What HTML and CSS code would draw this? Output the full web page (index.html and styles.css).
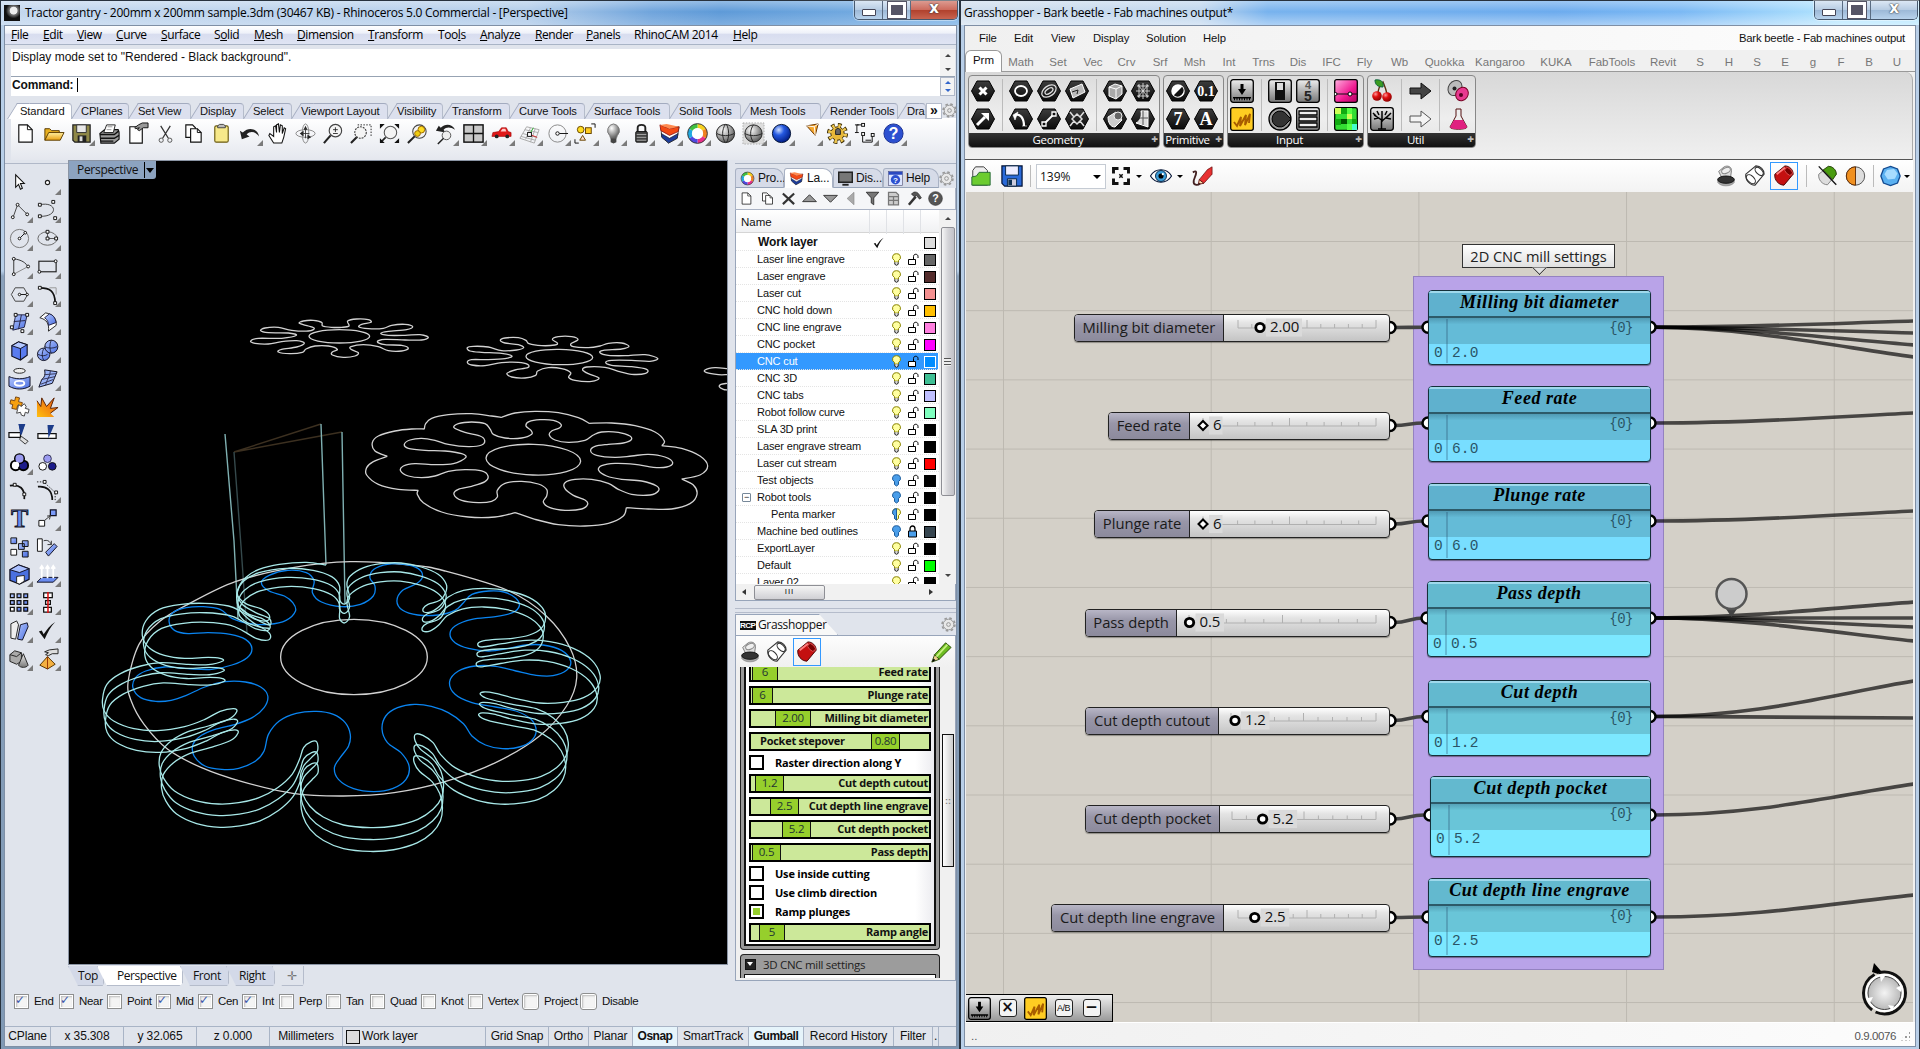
FILE: index.html
```html
<!DOCTYPE html>
<html lang="en">
<head>
<meta charset="utf-8">
<title>Tractor gantry - Rhinoceros / Grasshopper</title>
<link rel="stylesheet" href="styles.css">
</head>
<body>
<svg class="paints" aria-hidden="true">
<defs>
<linearGradient id="gGrey" x1="0" y1="0" x2="0" y2="1"><stop offset="0" stop-color="#eee"/><stop offset="1" stop-color="#777"/></linearGradient>
<linearGradient id="gBlue" x1="0" y1="0" x2="1" y2="1"><stop offset="0" stop-color="#b4c8ff"/><stop offset="1" stop-color="#4a6ee0"/></linearGradient>
<linearGradient id="gHex" x1="0" y1="0" x2="0" y2="1"><stop offset="0" stop-color="#3c3c3c"/><stop offset="1" stop-color="#0a0a0a"/></linearGradient>
<linearGradient id="gGold" x1="0" y1="0" x2="0" y2="1"><stop offset="0" stop-color="#fff0a0"/><stop offset="1" stop-color="#e8a010"/></linearGradient>
<linearGradient id="gFire" x1="0" y1="1" x2="1" y2="0"><stop offset="0" stop-color="#ffc010"/><stop offset="1" stop-color="#e85010"/></linearGradient>
<linearGradient id="gPink" x1="0" y1="0" x2="1" y2="1"><stop offset="0" stop-color="#ffb0e0"/><stop offset=".6" stop-color="#f01890"/><stop offset="1" stop-color="#b00060"/></linearGradient>
<radialGradient id="gSph" cx=".35" cy=".3" r=".75"><stop offset="0" stop-color="#fff"/><stop offset="1" stop-color="#555"/></radialGradient>
<radialGradient id="gSphB" cx=".35" cy=".3" r=".75"><stop offset="0" stop-color="#d0e0ff"/><stop offset=".4" stop-color="#2458e0"/><stop offset="1" stop-color="#001a80"/></radialGradient>
<radialGradient id="gRed" cx=".35" cy=".3" r=".75"><stop offset="0" stop-color="#ff9a9a"/><stop offset=".4" stop-color="#e01010"/><stop offset="1" stop-color="#800"/></radialGradient>
<radialGradient id="gCompass"><stop offset="0" stop-color="#f4f4f4"/><stop offset="1" stop-color="#b4b4b4"/></radialGradient>
</defs>
</svg>
<svg class="sprite" aria-hidden="true">
<symbol id="fly" viewBox="0 0 6 6"><path d="M6 0V6H0z" fill="#7a7a7a"/></symbol>
<symbol id="new" viewBox="0 0 24 24"><path d="M5 3h9l5 5v13H5z" fill="#fff" stroke="#111" stroke-width="1.2"/><path d="M14 3v5h5" fill="none" stroke="#111"/></symbol>
<symbol id="open" viewBox="0 0 24 24"><path d="M3 19V7h5l2 2h8v3" fill="#e8b020" stroke="#5a3c00"/><path d="M3 19l4-8h16l-4 8z" fill="url(#gGold)" stroke="#5a3c00"/></symbol>
<symbol id="save" viewBox="0 0 24 24"><path d="M3 3h18v18H5l-2-2z" fill="#8f8848" stroke="#222" stroke-width="1.3"/><path d="M7 3h10v8H7z" fill="#e8e8e8" stroke="#333"/><path d="M8 14h9v7H8z" fill="#222"/><path d="M10 15h3v5h-3z" fill="#ddd"/></symbol>
<symbol id="print" viewBox="0 0 24 24"><path d="M2 12l5-4h14l1 3v7l-5 4H3z" fill="#999" stroke="#111" stroke-width="1.2"/><path d="M6 11l3-8h9l-2 8z" fill="#fff" stroke="#222"/><path d="M10 5h5M9 8h5" stroke="#999"/><path d="M2 13h15l5-4M3 17h14l5-3M3 20h13" stroke="#111" stroke-width="1.4" fill="none"/></symbol>
<symbol id="props" viewBox="0 0 24 24"><path d="M4 5h13v17H4z" fill="#fff" stroke="#111" stroke-width="1.2"/><path d="M9 6l4-3 4-2h6v5h-5l-4 3-2-1 2-2-4 1z" fill="#999" stroke="#111"/></symbol>
<symbol id="cut" viewBox="0 0 24 24"><path d="M7 4l8 13M17 4L9 17" stroke="#333" stroke-width="1.3"/><circle cx="7.500" cy="19" r="2.200" fill="none" stroke="#555"/><circle cx="16.500" cy="19" r="2.200" fill="none" stroke="#555"/></symbol>
<symbol id="copy" viewBox="0 0 24 24"><path d="M4 3h7l3 3v10H4z" fill="#fff" stroke="#111" stroke-width="1.2"/><path d="M9 7h7l4 4v10H9z" fill="#fff" stroke="#111" stroke-width="1.2"/><path d="M16 7v4h4" fill="none" stroke="#111"/></symbol>
<symbol id="paste" viewBox="0 0 24 24"><rect x="5" y="4" width="14" height="17" rx="1.500" fill="#f7e98a" stroke="#6a5a10" stroke-width="1.2"/><path d="M8 6V4l2-1.500h4L16 4v2z" fill="#bbb" stroke="#444"/></symbol>
<symbol id="undo" viewBox="0 0 24 24"><path d="M2 9l2 9 8-3-3-2c4-4 9-3 13 2-1-7-10-11-17-4z" fill="#222"/></symbol>
<symbol id="pan" viewBox="0 0 24 24"><path d="M8 22l-5-8 1-2 4 3V5l2-1 1 7V3l2-1 1 9 1-8 2 1v8l2-6 1.500 1-2 9-2 6z" fill="#fff" stroke="#111" stroke-width="1.1"/></symbol>
<symbol id="orbit" viewBox="0 0 24 24"><ellipse cx="12" cy="12" rx="10" ry="4" fill="none" stroke="#888"/><ellipse cx="12" cy="12" rx="3.500" ry="10" fill="none" stroke="#888"/><path d="M10 9l-4 3 4 3zM14 13l4 3-4 2zM10 8l2-4 2 4z" fill="#222"/><path d="M12 6v11M9 12h7" stroke="#333" stroke-width=".9"/></symbol>
<symbol id="zoom" viewBox="0 0 24 24"><circle cx="14" cy="9" r="6.500" fill="#f4f4f4" stroke="#444" stroke-width="1.2"/><path d="M9 14l-7 8" stroke="#222" stroke-width="2.200"/><path d="M11.500 8h5M14 5.500v5M11.500 12h5" stroke="#222" stroke-width=".9"/></symbol>
<symbol id="zoomwin" viewBox="0 0 24 24"><path d="M8 3h14v13" stroke="#222" fill="none" stroke-dasharray="1.500 1.500"/><circle cx="11" cy="11" r="6" fill="#f4f4f4" stroke="#444" stroke-width="1.200" stroke-dasharray="2 1"/><path d="M7 16l-6 6" stroke="#222" stroke-width="2.200"/></symbol>
<symbol id="zoomext" viewBox="0 0 24 24"><circle cx="13" cy="11" r="6.500" fill="#f4f4f4" stroke="#555" stroke-width="1.100"/><path d="M8 16l-5 5" stroke="#222" stroke-width="1.800"/><path d="M2 2h5l-5 5zM22 2v5l-5-5zM22 22h-5l5-5zM2 22v-5l5 5z" fill="#111"/></symbol>
<symbol id="zoomsel" viewBox="0 0 24 24"><circle cx="14" cy="10" r="7" fill="#f4f4f4" stroke="#444" stroke-width="1.100"/><circle cx="16" cy="8" r="3.500" fill="#fd2" stroke="#960"/><circle cx="12" cy="12" r="3" fill="#ec1" stroke="#960"/><path d="M9 15l-7 7" stroke="#222" stroke-width="2.200"/></symbol>
<symbol id="undoview" viewBox="0 0 24 24"><path d="M2 9l3-5 2 2c5-5 12-4 15 2-5-3-9-3-12 0l2 3z" fill="#222"/><circle cx="13" cy="14" r="4.500" fill="#eee" stroke="#555"/><path d="M10 17l-6 6" stroke="#222" stroke-width="1.600"/></symbol>
<symbol id="views" viewBox="0 0 24 24"><rect x="2" y="3" width="20" height="18" fill="#c9c9c9" stroke="#111" stroke-width="1.500"/><path d="M12 3v18M2 12h20" stroke="#111" stroke-width="1.400"/></symbol>
<symbol id="car" viewBox="0 0 24 24"><path d="M2 15l1-4 6-1 3-4h5l2 4 3 1v4z" fill="#e01818" stroke="#900" stroke-width=".6"/><path d="M11 10l2-3h3l1 3z" fill="#fcc"/><circle cx="7" cy="15" r="2" fill="#222"/><circle cx="18" cy="15" r="2" fill="#222"/></symbol>
<symbol id="cplane" viewBox="0 0 24 24"><path d="M2 17L9 5l13 3-5 14zM5 12l14 4M7 8l14 3M3 15l15 4M13 6l-5 12M18 7l-5 14" stroke="#aaa" fill="none"/><path d="M12 13l4-7" stroke="#2a2"/><path d="M12 13l8 3" stroke="#c22"/><rect x="10" y="11" width="4" height="4" fill="#fff" stroke="#111"/></symbol>
<symbol id="circdot" viewBox="0 0 24 24"><circle cx="12" cy="12" r="9" fill="none" stroke="#888"/><circle cx="12" cy="12" r="1.800" fill="#fff" stroke="#111"/><path d="M14 12h9" stroke="#111"/></symbol>
<symbol id="select" viewBox="0 0 24 24"><circle cx="7" cy="8" r="3.500" fill="#fd2" stroke="#640"/><rect x="12" y="6" width="6" height="6" fill="#fc2" stroke="#640"/><path d="M9 14l3 5H6z" fill="#fdc" stroke="#640"/><path d="M18 2h4v4M1 18v4h4" fill="none" stroke="#111"/></symbol>
<symbol id="bulb" viewBox="0 0 24 24"><path d="M12 2a7 7 0 0 0-4 12l1 3h6l1-3A7 7 0 0 0 12 2z" fill="url(#gSph)" stroke="#777"/><path d="M9 17h6v4l-3 1.500L9 21z" fill="#444"/></symbol>
<symbol id="lock" viewBox="0 0 24 24"><path d="M8 11V6c0-4 8-4 8 0v5" fill="none" stroke="#222" stroke-width="2"/><rect x="6" y="10" width="12" height="11" rx="1" fill="#444" stroke="#111"/><path d="M7 13h10M7 16h10M7 19h10" stroke="#aaa"/></symbol>
<symbol id="layer" viewBox="0 0 24 24"><path d="M3 6l1 10 7 6 9-5 2-12z" fill="#fff" stroke="#222" stroke-width=".8"/><path d="M3.500 12l.5 4 7 6 9-5 1-5-9 5z" fill="#1c3c9a" stroke="#111" stroke-width=".6"/><path d="M2 3l10 4 10-2-1 5-9 4-9-5z" fill="#f34a14" stroke="#811" stroke-width=".8"/><path d="M2 3l7-1 13 3-10 2z" fill="#ff8a50"/></symbol>
<symbol id="wheel" viewBox="0 0 24 24"><g fill="none" stroke-width="4.500"><path d="M12 4a8 8 0 0 1 6.900 4" stroke="#f6d020"/><path d="M18.900 8a8 8 0 0 1 0 8" stroke="#f08020"/><path d="M18.900 16a8 8 0 0 1-6.900 4" stroke="#e8308a"/><path d="M12 20a8 8 0 0 1-6.900-4" stroke="#5048e0"/><path d="M5.100 16a8 8 0 0 1 0-8" stroke="#20a8e0"/><path d="M5.100 8A8 8 0 0 1 12 4" stroke="#40c040"/></g><circle cx="12" cy="12" r="10.300" fill="none" stroke="#333"/><circle cx="12" cy="12" r="5.800" fill="#fff"/></symbol>
<symbol id="sph" viewBox="0 0 24 24"><circle cx="12" cy="12" r="9.500" fill="url(#gSph)" stroke="#222"/><path d="M12 2.500c-4 5-4 14 0 19M3 12c5 3 13 3 18 0M13 2.500c3 5 3 14 0 19" stroke="#222" fill="none"/></symbol>
<symbol id="sphd" viewBox="0 0 24 24"><rect x="1" y="1" width="22" height="22" fill="#ddd" stroke="#aaa" stroke-dasharray="1.500 1.500"/><circle cx="12" cy="12" r="9" fill="url(#gSph)" stroke="#222"/><path d="M12 3c-4 5-4 13 0 18M3 12c5 3 13 3 18 0" stroke="#222" fill="none"/></symbol>
<symbol id="sphb" viewBox="0 0 24 24"><circle cx="12" cy="12" r="9.500" fill="url(#gSphB)" stroke="#013"/></symbol>
<symbol id="cone" viewBox="0 0 24 24"><path d="M9 4l12-2-3 12z" fill="#f6a830" stroke="#630"/><path d="M9 4l8 1 4-3M17 5l1 9" fill="none" stroke="#fff"/></symbol>
<symbol id="gear" viewBox="0 0 24 24"><circle cx="12" cy="12" r="8" fill="none" stroke="#3a2a00" stroke-width="6" stroke-dasharray="3.400 2.900"/><circle cx="12" cy="12" r="7" fill="#e8b838" stroke="#3a2a00"/><circle cx="12" cy="12" r="8" fill="none" stroke="#f0c850" stroke-width="4" stroke-dasharray="2.400 3.900" stroke-dashoffset="-.5"/><path d="M10 9c0-3 5-3 5 0v4h-5z" fill="#666" stroke="#222"/></symbol>
<symbol id="dims" viewBox="0 0 24 24"><path d="M3 3v8M1 3h4M1 11h4M3 3h6M9 12v9h10v-9M12 19h6" stroke="#111" fill="none"/><rect x="8" y="1.500" width="3" height="3" fill="#fff" stroke="#111"/><rect x="8" y="11" width="3" height="3" fill="#fff" stroke="#111"/><rect x="18" y="12" width="3" height="3" fill="#fff" stroke="#111"/></symbol>
<symbol id="help" viewBox="0 0 24 24"><circle cx="12" cy="12" r="10" fill="#2c50d0" stroke="#1a3090"/><text x="12" y="18" text-anchor="middle" font-family="Liberation Sans" font-size="17" font-weight="700" fill="#fff">?</text></symbol>
<symbol id="arrow" viewBox="0 0 24 24"><path d="M8 4v13l3-3 2 5 2-1-2-5h4z" fill="#fff" stroke="#111" stroke-width="1.100"/></symbol>
<symbol id="point" viewBox="0 0 24 24"><circle cx="12" cy="12" r="2.200" fill="#fff" stroke="#222" stroke-width="1.200"/></symbol>
<symbol id="poly" viewBox="0 0 24 24"><path d="M5 20L10 6l10 10" fill="none" stroke="#444"/><g fill="#fff" stroke="#111"><circle cx="5" cy="19" r="1.500"/><circle cx="10" cy="6" r="1.500"/><circle cx="20" cy="16" r="1.500"/></g></symbol>
<symbol id="curve" viewBox="0 0 24 24"><path d="M4 6c18-4 20 13 0 12" fill="none" stroke="#444"/><g fill="#fff" stroke="#111"><path d="M2.500 4.500h3v3h-3zM16.500 1.500h3v3h-3zM2.500 16.500h3v3h-3zM18.500 18.500h3v3h-3z"/></g></symbol>
<symbol id="circle" viewBox="0 0 24 24"><circle cx="12" cy="12" r="9.500" fill="none" stroke="#777"/><path d="M12 12l6-6" stroke="#111"/><circle cx="12" cy="12" r="1.400" fill="#fff" stroke="#111"/><circle cx="18" cy="6" r="1.400" fill="#fff" stroke="#111"/></symbol>
<symbol id="ellipse" viewBox="0 0 24 24"><ellipse cx="12" cy="12" rx="10" ry="7" fill="none" stroke="#666"/><path d="M12 5v7h9" stroke="#555" fill="none"/><path d="M10.500 3.500h3v3h-3zM10.500 10.500h3v3h-3zM19.500 10.500h3v3h-3z" fill="#fff" stroke="#111"/></symbol>
<symbol id="arc" viewBox="0 0 24 24"><path d="M6 20V4c8 1 13 4 15 9" fill="none" stroke="#333"/><path d="M6 20l15-8" stroke="#888"/><g fill="#fff" stroke="#111"><circle cx="6" cy="4" r="1.500"/><circle cx="6" cy="20" r="1.500"/><circle cx="21" cy="12" r="1.500"/></g></symbol>
<symbol id="rect" viewBox="0 0 24 24"><rect x="3" y="6.500" width="18" height="11" fill="none" stroke="#222" stroke-width="1.200"/><circle cx="3.500" cy="17.500" r="1.500" fill="#fff" stroke="#111"/><circle cx="20.500" cy="6.500" r="1.500" fill="#fff" stroke="#111"/></symbol>
<symbol id="hexa" viewBox="0 0 24 24"><path d="M3.500 12l4-7h9l4 7-4 7h-9z" fill="none" stroke="#444"/><path d="M12 12h8" stroke="#111"/><circle cx="12" cy="12" r="1.300" fill="#fff" stroke="#111"/><circle cx="20" cy="12" r="1.300" fill="#fff" stroke="#111"/></symbol>
<symbol id="fillet" viewBox="0 0 24 24"><path d="M4 5c10 0 16 3 16 16" fill="none" stroke="#111" stroke-width="1.800"/><path d="M14 5h7v7" fill="none" stroke="#999"/><path d="M2.500 3.500h3v3h-3zM18.500 19.500h3v3h-3z" fill="#fff" stroke="#111"/></symbol>
<symbol id="srf" viewBox="0 0 24 24"><path d="M8 4h12l-3 13-12 3z" fill="url(#gBlue)" stroke="#224"/><path d="M14 4l-3 15M6 11l12-1" stroke="#224"/><path d="M6.500 2.500h3v3h-3zM18.500 2.500h3v3h-3zM2.500 15.500h3v3h-3zM13.500 19.500h3v3h-3z" fill="#fff" stroke="#111"/></symbol>
<symbol id="srfc" viewBox="0 0 24 24"><path d="M4 7l6-5c8 1 12 7 11 13l-8 6c1-8-2-12-9-14z" fill="#fff" stroke="#222"/><path d="M9 7l5-4c4 1 6 4 7 9l-8 3c0-3-1-6-4-8z" fill="url(#gBlue)" stroke="#224"/></symbol>
<symbol id="box" viewBox="0 0 24 24"><path d="M4 7l7-4 9 3v11l-7 5-9-4z" fill="#5a7cf0" stroke="#112" stroke-width="1.200"/><path d="M4 7l9 3 7-4-9-3z" fill="#b4c8ff" stroke="#112"/><path d="M13 10v12" stroke="#112"/></symbol>
<symbol id="sphs" viewBox="0 0 24 24"><circle cx="8" cy="16" r="6.500" fill="url(#gBlue)" stroke="#112"/><circle cx="16" cy="8" r="6.800" fill="url(#gBlue)" stroke="#112"/><path d="M9 8c4 2 9 2 13 0M16 1c-2 4-2 10 0 14M2 16c4 2 7 2 10 0M8 10c-2 4-2 9 0 12" fill="none" stroke="#112" stroke-width=".8"/></symbol>
<symbol id="cyl" viewBox="0 0 24 24"><ellipse cx="12" cy="4" rx="6" ry="2.500" fill="#eee" stroke="#222"/><path d="M1 10c7 3 15 3 22 0v10c-7 4-15 4-22 0z" fill="url(#gBlue)" stroke="#112"/><ellipse cx="12" cy="17" rx="5" ry="2.500" fill="none" stroke="#fff" stroke-width="2"/></symbol>
<symbol id="mesh" viewBox="0 0 24 24"><path d="M9 3l13 2-5 12-14 4 3-8c3-2 4-5 3-10z" fill="#9ab4f8" stroke="#112"/><path d="M9 8l12-1M6 13l14-3M5 18l13-5M15 4c0 6-4 9-5 15" stroke="#335" fill="none"/></symbol>
<symbol id="puzzle" viewBox="0 0 24 24"><path d="M3 5l4 1 1-4 4 1-1 4 4 1-1 4-4-1-1 4-5-1 1-4-3-1z" fill="#f6a010" stroke="#741"/><path d="M11 10l3 2 3-3 2 3-1 2 4 1-1 4-3-1-1 4-3-1-1-3-4 1 1-4z" fill="#fff" stroke="#444"/></symbol>
<symbol id="explode" viewBox="0 0 24 24"><path d="M1 23V6l4 6 1-9 5 9 8-9-4 11 8-1-8 6 4 4z" fill="url(#gFire)"/><path d="M1 6l4 6 1-9 5 9 8-9-4 11 8-1-8 6" fill="none" stroke="#5a2000"/></symbol>
<symbol id="trim" viewBox="0 0 24 24"><path d="M11 1h7l-4 12z" fill="#1c3c8a"/><path d="M1 10h12v5H1z" fill="#fff" stroke="#111" stroke-width="1.300"/><path d="M11 1h7l-5 12z" fill="#1c3c8a"/><path d="M14 14l7 5-3 3-6-5z" fill="#ddd" stroke="#333"/></symbol>
<symbol id="split" viewBox="0 0 24 24"><path d="M2 11h19v5H2z" fill="#fff" stroke="#111" stroke-width="1.300"/><path d="M12 2h7l-6 14z" fill="#1c3c8a"/></symbol>
<symbol id="group" viewBox="0 0 24 24"><circle cx="8" cy="15" r="5" fill="#fff" stroke="#000" stroke-width="2"/><circle cx="16" cy="15" r="5" fill="#1c1c8a" stroke="#000" stroke-width="2"/><circle cx="12" cy="8" r="5" fill="#9a9af0" stroke="#000" stroke-width="1.500"/><circle cx="8.500" cy="14.500" r="3.200" fill="#fff"/></symbol>
<symbol id="ungroup" viewBox="0 0 24 24"><circle cx="7" cy="16" r="4" fill="#fff" stroke="#111"/><circle cx="17" cy="16" r="4" fill="#1c1c8a" stroke="#111"/><circle cx="12" cy="8" r="4" fill="#9a9af0" stroke="#335"/></symbol>
<symbol id="cedit" viewBox="0 0 24 24"><path d="M2 7c10-2 16 3 15 14" fill="none" stroke="#111" stroke-width="1.800"/><path d="M5.500 4.500h3v3h-3zM15.500 14.500h3v3h-3z" fill="#fff" stroke="#111"/></symbol>
<symbol id="offset" viewBox="0 0 24 24"><path d="M2 8c9-1 15 4 15 14" fill="none" stroke="#111" stroke-width="1.800"/><path d="M1 3h7l12 11v8" fill="none" stroke="#222" stroke-dasharray="1.500 1.500"/><path d="M7.500 1.500h3v3h-3zM19.500 12.500h3v3h-3z" fill="#fff" stroke="#111"/></symbol>
<symbol id="text" viewBox="0 0 24 24"><text x="12" y="21" text-anchor="middle" font-family="Liberation Serif" font-size="27" font-weight="700" fill="#6a8cf0" stroke="#112" stroke-width="1">T</text></symbol>
<symbol id="move" viewBox="0 0 24 24"><path d="M3 14h6v6H3z" fill="#fff" stroke="#111"/><path d="M15 3h6v6h-6z" fill="#7a9af8" stroke="#112" stroke-width="1.300"/><path d="M9 14l6-5M11.500 9.500L15 9l-1 4" stroke="#333" fill="none"/></symbol>
<symbol id="array" viewBox="0 0 24 24"><path d="M3 3h6v6H3z" fill="url(#gBlue)" stroke="#111"/><path d="M15 6h6v6h-6zM11 9h6v6h-6zM15 17h6v6h-6z" fill="url(#gBlue)" stroke="#111"/><path d="M3 15h6v6H3z" fill="#fff" stroke="#111"/></symbol>
<symbol id="rot" viewBox="0 0 24 24"><path d="M1.500 4h5v13h-5z" fill="#fff" stroke="#111"/><path d="M19 9l3 3-9 10-3-4z" fill="url(#gBlue)" stroke="#112"/><path d="M8 6c4-1 6 0 8 4M16 6v4h-4" stroke="#333" fill="none"/></symbol>
<symbol id="boxcut" viewBox="0 0 24 24"><path d="M2 7l9-5 11 4v11l-10 5-10-4z" fill="#4a70e0" stroke="#112" stroke-width="1.300"/><path d="M2 7l10 3 10-4-11-4z" fill="#aac0ff" stroke="#112"/><path d="M9 14l8-1v6l-5 3-3-1z" fill="#fff" stroke="#222"/></symbol>
<symbol id="extr" viewBox="0 0 24 24"><path d="M1 20l5-5h17l-5 5z" fill="#6a8cf0" stroke="#112"/><path d="M6 16V3M12 16V3M18 16V3M4 6l2-3 2 3M10 6l2-3 2 3M16 6l2-3 2 3" stroke="#fff" fill="none" stroke-width="1.800"/></symbol>
<symbol id="grid9" viewBox="0 0 24 24"><path d="M2.500 3h4v4h-4zM9.500 3h4v4h-4zM16.500 3h4v4h-4zM2.500 10h4v4h-4zM9.500 10h4v4h-4zM16.500 10h4v4h-4zM9.500 17h4v4h-4zM16.500 17h4v4h-4z" fill="url(#gBlue)" stroke="#111" stroke-width="1.300"/><path d="M2.500 17h4v4h-4z" fill="#fff" stroke="#111" stroke-width="1.300"/></symbol>
<symbol id="align" viewBox="0 0 24 24"><path d="M8 2h9v5H8zM10 10h5v4h-5zM8 17h8v5H8z" fill="#fff" stroke="#111" stroke-width="1.300"/><path d="M12.500 1v22" stroke="#e01010" stroke-width="1.600"/></symbol>
<symbol id="twist" viewBox="0 0 24 24"><path d="M3 5l6-3 2 4-3 15-5-1z" fill="#eee" stroke="#222"/><path d="M13 6l7-2 1 4-6 14-5-1z" fill="url(#gBlue)" stroke="#112"/></symbol>
<symbol id="check" viewBox="0 0 24 24"><path d="M3 13l3-1 2 4c3-5 7-10 12-13-5 5-8 11-11 18z" fill="#111"/></symbol>
<symbol id="solids" viewBox="0 0 24 24"><path d="M2 8l5-4 7 2v9l-5 3-7-3z" fill="#aaa" stroke="#222"/><path d="M2 8l7 2 5-4" fill="none" stroke="#222"/><path d="M16 7l5 12c-2 3-8 3-10 0z" fill="url(#gGrey)" stroke="#222"/></symbol>
<symbol id="pyr" viewBox="0 0 24 24"><path d="M12 10l8 8-8 5-8-4z" fill="#f4b040" stroke="#530"/><path d="M12 10v13" stroke="#930"/><path d="M9 5l5-2 9-1v5h-6l-4 2-3-1 3-2z" fill="#ddd" stroke="#222"/></symbol>
<!-- layer panel -->
<symbol id="x" viewBox="0 0 24 24"><path d="M3 4l18 17M21 4L3 21" stroke="#333" stroke-width="3.500"/></symbol>
<symbol id="up" viewBox="0 0 24 24"><path d="M1 17L12 6l11 11z" fill="#999" stroke="#333" stroke-width="1.500"/></symbol>
<symbol id="down" viewBox="0 0 24 24"><path d="M1 7l11 11L23 7z" fill="#999" stroke="#333" stroke-width="1.500"/></symbol>
<symbol id="left" viewBox="0 0 24 24"><path d="M16 2v20L5 12z" fill="#aaa" stroke="#888"/></symbol>
<symbol id="filter" viewBox="0 0 24 24"><path d="M2 2h20l-8 9v11l-4-3v-8z" fill="#777" stroke="#333" stroke-width="1.500"/></symbol>
<symbol id="sheet" viewBox="0 0 24 24"><path d="M4 2h12l4 4v16H4zM4 9h16M4 15h16M12 9v13" fill="#ccc" stroke="#777" stroke-width="2"/></symbol>
<symbol id="hammer" viewBox="0 0 24 24"><path d="M3 22L14 9" stroke="#333" stroke-width="4"/><path d="M7 5c4-5 9-4 12 0l4 6-3 2-5-6-3 2z" fill="#555" stroke="#222"/></symbol>
<symbol id="helpg" viewBox="0 0 24 24"><circle cx="12" cy="12" r="11" fill="#555" stroke="#333"/><text x="12" y="18" text-anchor="middle" font-family="Liberation Sans" font-size="17" font-weight="700" fill="#fff">?</text></symbol>
<symbol id="cog" viewBox="0 0 24 24"><circle cx="12" cy="12" r="8.500" fill="#e8e8e8" stroke="#999" stroke-width="1.600"/><circle cx="12" cy="12" r="10.300" fill="none" stroke="#999" stroke-width="2.600" stroke-dasharray="4.100 4"/><circle cx="12" cy="12" r="3" fill="none" stroke="#999" stroke-width="1.600"/></symbol>
<symbol id="monitor" viewBox="0 0 24 24"><rect x="1" y="2" width="22" height="16" fill="#777" stroke="#222" stroke-width="2.500"/><path d="M7 22h10" stroke="#222" stroke-width="3"/></symbol>
<symbol id="helpw" viewBox="0 0 24 24"><rect x="1" y="1" width="22" height="22" fill="#dde6ff" stroke="#557"/><path d="M1 1h22v5H1z" fill="#2a48c0"/><circle cx="12" cy="14" r="7.500" fill="#2c50d0"/><text x="12" y="19" text-anchor="middle" font-family="Liberation Sans" font-size="13" font-weight="700" fill="#fff">?</text></symbol>
<symbol id="sbulb" viewBox="0 0 9 14"><path d="M4.500.7a3.600 3.600 0 0 0-2 6.800v1.600h4V7.500a3.600 3.600 0 0 0-2-6.800z" fill="#ffffa0" stroke="#8a8400"/><path d="M2.800 9.300v2l1.700 1 1.700-1v-2" fill="#ddd" stroke="#222"/></symbol>
<symbol id="sbulbOff" viewBox="0 0 9 14"><path d="M4.500.7a3.600 3.600 0 0 0-2 6.800v3l2 1.500 2-1.500v-3a3.600 3.600 0 0 0-2-6.800z" fill="#4a9eea" stroke="#1a5a9a"/></symbol>
<symbol id="sbulbHalf" viewBox="0 0 9 14"><path d="M4.500.7a3.600 3.600 0 0 0-2 6.800v3l2 1.500 2-1.500v-3a3.600 3.600 0 0 0-2-6.800z" fill="#ffffa0" stroke="#8a8400"/><path d="M4.500.7a3.600 3.600 0 0 0-2 6.800v3l2 1.500z" fill="#4a9eea" stroke="#1a5a9a"/></symbol>
<symbol id="slock" viewBox="0 0 13 14"><path d="M1.500 6.500h7v5h-7z" fill="#fff" stroke="#000"/><path d="M6.500 6V3.500c0-3 4.500-3 4.500 0V5" fill="none" stroke="#000"/></symbol>
<symbol id="slockOn" viewBox="0 0 13 14"><path d="M3 6V4c0-4 5-4 5 0v2" fill="none" stroke="#000" stroke-width="1.300"/><path d="M1.500 6h8v6h-8z" fill="#4a9eea" stroke="#000"/></symbol>
<!-- grasshopper -->
<symbol id="hex" viewBox="0 0 24 24"><path d="M.5 12L6 2h12l5.500 10L18 22H6z" fill="url(#gHex)" stroke="#000" stroke-linejoin="round"/></symbol>
<symbol id="h-x" viewBox="0 0 24 24"><path d="M8.500 8.500l7 7M15.500 8.500l-7 7" stroke="#fff" stroke-width="3"/></symbol>
<symbol id="h-arrow" viewBox="0 0 24 24"><path d="M6 18l8-8" stroke="#fff" stroke-width="3"/><path d="M10 6h8v8z" fill="#fff"/></symbol>
<symbol id="h-circle" viewBox="0 0 24 24"><ellipse cx="12" cy="12" rx="6" ry="5" fill="none" stroke="#fff" stroke-width="1.800"/></symbol>
<symbol id="h-arc" viewBox="0 0 24 24"><path d="M6 8c5-2 9 3 9 11" fill="none" stroke="#fff" stroke-width="2.200"/><path d="M4 8l5-3-3 8zM13 19h5" fill="#fff" stroke="#fff" stroke-width=".6"/></symbol>
<symbol id="h-ell" viewBox="0 0 24 24"><g transform="rotate(-35 12 12)" fill="none" stroke="#ddd" stroke-width="1.300"><ellipse cx="12" cy="12" rx="8" ry="5"/><ellipse cx="12" cy="12" rx="4.500" ry="2.300"/></g></symbol>
<symbol id="h-line" viewBox="0 0 24 24"><path d="M7 17l9-9" stroke="#fff" stroke-width="1.800"/><path d="M5 15h4v4H5zM15 5h4v4h-4z" fill="#111" stroke="#fff" stroke-width="1.300"/></symbol>
<symbol id="h-plane" viewBox="0 0 24 24"><path d="M5 10l12-5 3 8-12 6z" fill="#bbb" stroke="#fff"/><path d="M7 13l6-2-1 4" stroke="#222" fill="none"/></symbol>
<symbol id="h-mesh" viewBox="0 0 24 24"><path d="M12 7l5 5-5 5-5-5zM5 5l4 5M15 14l4 5M19 5l-4 5M9 14l-4 5" fill="none" stroke="#ddd" stroke-width="1.500"/></symbol>
<symbol id="h-box" viewBox="0 0 24 24"><path d="M6 8l6-3 7 2v8l-6 5-7-3z" fill="#aaa" stroke="#fff"/><path d="M6 8l7 2 6-3M13 10v9" stroke="#fff" fill="none"/></symbol>
<symbol id="h-cyl" viewBox="0 0 24 24"><path d="M5 10l8-5 6 8-7 7c-5 0-7-5-7-10z" fill="#ccc" stroke="#fff"/><circle cx="15" cy="9" r="4" fill="#666" stroke="#eee"/></symbol>
<symbol id="h-net" viewBox="0 0 24 24"><path d="M6 7h12M5 12h14M6 17h12M8 5v14M12 4v16M16 5v14M7 6l10 12M17 6L7 18" stroke="#ddd" stroke-width=".9"/></symbol>
<symbol id="h-srf" viewBox="0 0 24 24"><path d="M10 4h7v16l-12-4c4-2 6-6 5-12z" fill="#ddd" stroke="#fff"/><path d="M9 11h8M12 4v14" stroke="#555"/></symbol>
<symbol id="h-half" viewBox="0 0 24 24"><circle cx="12" cy="12" r="6" fill="#fff" stroke="#fff" stroke-width="1.500"/><path d="M7.800 16.200l8.400-8.400A6 6 0 0 1 7.800 16.200z" fill="#111"/></symbol>
<symbol id="h-01" viewBox="0 0 24 24"><text x="12" y="17" text-anchor="middle" font-family="Liberation Serif" font-size="14" font-weight="700" fill="#fff">0.1</text></symbol>
<symbol id="h-7" viewBox="0 0 24 24"><text x="12" y="18" text-anchor="middle" font-family="Liberation Serif" font-size="18" font-weight="700" fill="#fff">7</text></symbol>
<symbol id="h-a" viewBox="0 0 24 24"><text x="12" y="18" text-anchor="middle" font-family="Liberation Serif" font-size="18" font-weight="700" fill="#fff">A</text></symbol>
<symbol id="btn" viewBox="0 0 24 24"><rect x=".7" y=".7" width="22.600" height="22.600" rx="2.500" fill="url(#gGrey)" stroke="#000" stroke-width="1.300"/></symbol>
<symbol id="g-down" viewBox="0 0 24 24"><path d="M12 5v6" stroke="#000" stroke-width="3"/><path d="M8 10h8l-4 6zM3 18h18v1.500H3z"/><path d="M4 20h17" stroke="#000" stroke-width="2.500" stroke-dasharray="1 1.500"/></symbol>
<symbol id="g-scrib" viewBox="0 0 24 24"><rect x=".7" y=".7" width="22.600" height="22.600" rx="2" fill="#fc2" stroke="#000" stroke-width="1.300"/><path d="M4 15l3 4 4-9-1 9 6-11-1 10 5-11-1 9" fill="none" stroke="#a85c00" stroke-width="1.900"/></symbol>
<symbol id="g-tog" viewBox="0 0 24 24"><rect x="7" y="3" width="10" height="18" fill="#111"/><rect x="9" y="4" width="6" height="7" fill="#ddd"/></symbol>
<symbol id="g-knob" viewBox="0 0 24 24"><circle cx="12" cy="12" r="11" fill="#999" stroke="#000" stroke-width="1.300"/><path d="M23 12l-4-4a8 8 0 1 0 0 8z" fill="#333" stroke="#000"/></symbol>
<symbol id="g-45" viewBox="0 0 24 24"><text x="12" y="10" text-anchor="middle" font-family="Liberation Sans" font-size="11" font-weight="700" fill="#555">4</text><text x="12" y="22" text-anchor="middle" font-family="Liberation Sans" font-size="14" font-weight="700" fill="#222">5</text></symbol>
<symbol id="g-list" viewBox="0 0 24 24"><path d="M3 4h18v4H3zM3 10h18v4H3zM3 16h18v4H3z" fill="#eee" stroke="#000" stroke-width="1.300"/></symbol>
<symbol id="g-pink" viewBox="0 0 24 24"><rect x=".7" y=".7" width="22.600" height="22.600" rx="2" fill="url(#gPink)" stroke="#000" stroke-width="1.300"/><path d="M1 15h22" stroke="#111"/><circle cx="16" cy="15" r="2" fill="#fff" stroke="#000"/><circle cx="1.500" cy="15" r="1.500" fill="#fff" stroke="#000"/></symbol>
<symbol id="g-green" viewBox="0 0 24 24"><rect x=".7" y=".7" width="22.600" height="22.600" rx="2" fill="#3d3" stroke="#000" stroke-width="1.300"/><path d="M1 1h6v6H1zM13 7h5v5h-5z" fill="#cf5"/><path d="M7 1h6v6H7zM1 12h6v6H1zM18 12h5v5h-5z" fill="#1a1"/><path d="M7 12h6v5H7z" fill="#050"/><path d="M13 1h5v6h-5zM13 17h5v6h-5z" fill="#5f4"/><path d="M18 17h5v6h-5z" fill="#4fc"/></symbol>
<symbol id="g-cherry" viewBox="0 0 24 24"><path d="M8 15c0-6 3-10 5-12 2 5 3 7 4 12" fill="none" stroke="#5a3010" stroke-width="1.400"/><path d="M5 1c6-1 9 2 8 7-5 0-8-2-8-7z" fill="#3c9c20" stroke="#164"/><circle cx="7" cy="17" r="4.800" fill="url(#gRed)"/><circle cx="17" cy="18" r="4.800" fill="url(#gRed)"/></symbol>
<symbol id="g-tree" viewBox="0 0 24 24"><path d="M11.500 22v-9L4 8M12 14l7-6M12 15V4M8 11L4 12M16 11l5 1M9 8L7 4M15 8l2-4M8 22h8M6 9L3 6M18 9l3-3" stroke="#000" stroke-width="1.500" fill="none"/></symbol>
<symbol id="g-ra" viewBox="0 0 24 24"><path d="M2 9h11V4l10 8-10 8v-5H2z" fill="#444" stroke="#111"/></symbol>
<symbol id="g-rw" viewBox="0 0 24 24"><path d="M2 9h11V4l10 8-10 8v-5H2z" fill="#f4f4f4" stroke="#555"/></symbol>
<symbol id="g-cell" viewBox="0 0 24 24"><ellipse cx="9" cy="9" rx="6.500" ry="8" transform="rotate(35 9 9)" fill="#bbb" stroke="#444"/><circle cx="8.500" cy="9.500" r="2" fill="#222"/><ellipse cx="16" cy="15" rx="6" ry="7" transform="rotate(35 16 15)" fill="#e83890" stroke="#702"/><circle cx="15" cy="16" r="2" fill="#502"/></symbol>
<symbol id="g-flask" viewBox="0 0 24 24"><path d="M10 2h5v7l6 11c0 3-17 3-17 0l6-11z" fill="#eee" stroke="#511"/><path d="M8 13h9l4 7c0 3-17 3-17 0z" fill="#e02080"/></symbol>
<symbol id="g-open" viewBox="0 0 24 24"><path d="M3 22V6l3-4h9l4 4v16z" fill="#eee" stroke="#333"/><path d="M2 22V13l5-1 3-4h12v14z" fill="#6ccc30" stroke="#263"/></symbol>
<symbol id="g-save" viewBox="0 0 24 24"><path d="M1 1h22v22H4l-3-3z" fill="#2a6ad8" stroke="#013" stroke-width="1.300"/><path d="M5 1h14v10H5z" fill="#eef" stroke="#024"/><path d="M7 15h10v8H7z" fill="#ccd" stroke="#024"/><path d="M8 16h4v6H8z" fill="#135"/></symbol>
<symbol id="g-fit" viewBox="0 0 24 24"><path d="M3 9V3h6M15 3h6v6M21 15v6h-6M9 21H3v-6" fill="none" stroke="#111" stroke-width="3.500"/><path d="M10 10l4 4M14 10l-4 4" stroke="#111" stroke-width="1.800"/></symbol>
<symbol id="g-eye" viewBox="0 0 24 24"><path d="M.5 12C6 3 18 3 23.500 12 18 21 6 21 .5 12z" fill="#fff" stroke="#013" stroke-width="1.200"/><circle cx="12" cy="12" r="6" fill="#3a9cd8" stroke="#024"/><circle cx="12" cy="12" r="2.800"/><circle cx="14" cy="10" r="1.200" fill="#fff"/></symbol>
<symbol id="g-pen" viewBox="0 0 24 24"><path d="M9 16L18 5l5-3v8L14 20z" fill="#e83030" stroke="#611" stroke-width=".8"/><path d="M9 16l5 4-6 1z" fill="#fda" stroke="#611"/><path d="M2 8c7-4 2 5 1 9-1 5 4 6 7 3" fill="none" stroke="#422" stroke-width="2"/></symbol>
<symbol id="g-cup" viewBox="0 0 24 24"><path d="M4 7l6-5c4-2 8 0 8 4l-1 7H7z" fill="#ddd" stroke="#777"/><ellipse cx="12" cy="6" rx="5" ry="3" fill="#eee" stroke="#888" transform="rotate(-25 12 6)"/><path d="M3 15l9-2 9 2v4c-3 5-15 5-18 0z" fill="#aaa" stroke="#777" stroke-width=".6"/><ellipse cx="12" cy="16" rx="9" ry="4" fill="#333" stroke="#111"/></symbol>
<symbol id="g-wire" viewBox="0 0 24 24"><path d="M2 10L13 1c5 0 9 4 9 9L12 22C6 22 1 16 2 10z" fill="#fff" stroke="#333" stroke-width="1.200"/><ellipse cx="16.500" cy="7" rx="3" ry="5.500" transform="rotate(-45 16.500 7)" fill="none" stroke="#333" stroke-width="1.200"/><ellipse cx="7.500" cy="15.500" rx="3.500" ry="6" transform="rotate(-45 7.500 15.500)" fill="none" stroke="#333" stroke-width="1.200"/></symbol>
<symbol id="g-red" viewBox="0 0 24 24"><path d="M2 10L13 1c5 0 9 4 9 9L12 22C6 22 1 16 2 10z" fill="#c41010" stroke="#400"/><ellipse cx="17" cy="7" rx="3" ry="5" transform="rotate(-45 17 7)" fill="#700" stroke="#e05050"/><path d="M4 10l9-7" stroke="#ff8080" stroke-width="2"/></symbol>
<symbol id="g-grn" viewBox="0 0 24 24"><path d="M2 10L13 1c5 0 9 4 9 9L12 22C6 22 1 16 2 10z" fill="#ddd" stroke="#777"/><path d="M7 5l6-4c5 0 9 4 9 9l-4 6z" fill="#4a9c10" stroke="#240"/><path d="M2 1l20 21" stroke="#111" stroke-width="1.500"/></symbol>
<symbol id="g-half" viewBox="0 0 24 24"><circle cx="12" cy="12" r="10.500" fill="#ddd" stroke="#444"/><path d="M12 1.500a10.500 10.500 0 0 0 0 21z" fill="#f09020" stroke="#520"/></symbol>
<symbol id="g-blue" viewBox="0 0 24 24"><path d="M12 1l8 3 3 8-3 8-8 3-8-3-3-8 3-8z" fill="#5ab0f0" stroke="#124a90" stroke-width="1.500"/><path d="M8 5l8-1 4 5-3 6-8 1-4-6z" fill="#a8dcff"/></symbol>
<symbol id="g-pencil" viewBox="0 0 24 24"><path d="M5 15L17 2l6 5L10 20z" fill="#6cbc20" stroke="#240"/><path d="M5 15l5 5-8 3z" fill="#f0d090" stroke="#240"/><path d="M2 23l2-4 2 2z"/><path d="M7 17L19 4" stroke="#c8f080" stroke-width="2"/></symbol>
</svg>

<main class="desktop">
<section class="window rhino">
  <header class="titlebar"><i class="appicon"></i><h1 class="t-rhino">Tractor gantry - 200mm x 200mm sample.3dm (30467 KB) - Rhinoceros 5.0 Commercial - [Perspective]</h1>
    <div class="wbtns"><b class="min"></b><b class="max"></b><b class="close red">x</b></div></header>
  <div class="client">
    <nav class="menu"><span><u>F</u>ile</span><span><u>E</u>dit</span><span><u>V</u>iew</span><span><u>C</u>urve</span><span><u>S</u>urface</span><span>S<u>o</u>lid</span><span><u>M</u>esh</span><span><u>D</u>imension</span><span><u>T</u>ransform</span><span>Too<u>l</u>s</span><span><u>A</u>nalyze</span><span><u>R</u>ender</span><span><u>P</u>anels</span><span>RhinoCAM 2014</span><span><u>H</u>elp</span></nav>
    <div class="command"><div class="hist"><span>Display mode set to "Rendered - Black background".</span><em class="sb"><i class="tu"></i><i class="td"></i></em></div>
      <div class="prompt"><b>Command:</b><span class="caret"></span><em class="sb blue"><i class="tu"></i><i class="td"></i></em></div></div>
    <div class="tooltabs"><span class="on">Standard</span><span>CPlanes</span><span>Set View</span><span>Display</span><span>Select</span><span>Viewport Layout</span><span>Visibility</span><span>Transform</span><span>Curve Tools</span><span>Surface Tools</span><span>Solid Tools</span><span>Mesh Tools</span><span>Render Tools</span><span>Dra</span><b>»</b><svg><use href="#cog"/></svg></div>
    <div class="toolbar" id="toolbar"></div>
    <div class="work">
      <div class="side" id="side"></div>
      <div class="mid">
        <div class="viewport"><svg id="scene" viewBox="69 160 658 803"></svg><span class="vlabel">Perspective<i></i></span></div>
        <div class="vtabs"><span>Top</span><span class="on">Perspective</span><span>Front</span><span>Right</span><span class="plus">✛</span></div>
      </div>
      <aside class="dock">
        <div class="ptabs"><span><svg><use href="#wheel"/></svg>Pro...</span><span class="on"><svg><use href="#layer"/></svg>La...</span><span><svg><use href="#monitor"/></svg>Dis...</span><span><svg><use href="#helpw"/></svg>Help</span><svg class="cog"><use href="#cog"/></svg></div>
        <div class="pbar"><svg><use href="#new"/></svg><svg><use href="#copy"/></svg><svg><use href="#x"/></svg><svg><use href="#up"/></svg><svg><use href="#down"/></svg><svg><use href="#left"/></svg><svg><use href="#filter"/></svg><svg><use href="#sheet"/></svg><svg><use href="#hammer"/></svg><svg><use href="#helpg"/></svg></div>
        <div class="layers"><div class="lwrap"><div class="lhead"><span>Name</span><i></i><i></i><i></i><i></i></div><div class="lrows" id="layers"></div></div>
          <div class="vsb"><i class="tu"></i><b></b><i class="td"></i></div></div>
        <div class="hsb"><i class="tl"></i><b>III</b><i class="tr"></i></div>
        <div class="rcptabs"><span><b>RCP</b>Grasshopper</span><svg class="cog"><use href="#cog"/></svg></div>
        <div class="rcp">
          <div class="rcpbar"><svg><use href="#g-cup"/></svg><svg><use href="#g-wire"/></svg><span class="picked"><svg><use href="#g-red"/></svg></span><svg class="end"><use href="#g-pencil"/></svg></div>
          <div class="rcpbody"><div class="rcpcol"><div class="rgroup" id="rcp"></div><div class="rnext"><div class="rhead"><i></i>3D CNC mill settings</div><div class="rin"></div></div></div><div class="rsb"><b>::</b></div></div>
        </div>
      </aside>
    </div>
    <div class="osnap"><span class="on">End</span><span class="on">Near</span><span>Point</span><span class="on">Mid</span><span class="on">Cen</span><span class="on">Int</span><span>Perp</span><span>Tan</span><span>Quad</span><span>Knot</span><span>Vertex</span><span class="btn">Project</span><span class="btn">Disable</span></div>
    <footer class="status"><span>CPlane</span><span>x 35.308</span><span>y 32.065</span><span>z 0.000</span><span>Millimeters</span><span class="lay"><i></i>Work layer</span><span>Grid Snap</span><span>Ortho</span><span>Planar</span><span class="on">Osnap</span><span>SmartTrack</span><span class="on">Gumball</span><span>Record History</span><span>Filter</span><span>.</span></footer>
  </div>
</section>

<section class="window gh">
  <header class="titlebar"><h1 class="t-gh">Grasshopper - Bark beetle - Fab machines output*</h1>
    <div class="wbtns"><b class="min"></b><b class="max"></b><b class="close">x</b></div></header>
  <div class="client">
    <nav class="ghmenu"><span>File</span><span>Edit</span><span>View</span><span>Display</span><span>Solution</span><span>Help</span><span class="doc">Bark beetle - Fab machines output</span></nav>
    <div class="ghtabs"><span class="on">Prm</span><span>Math</span><span>Set</span><span>Vec</span><span>Crv</span><span>Srf</span><span>Msh</span><span>Int</span><span>Trns</span><span>Dis</span><span>IFC</span><span>Fly</span><span>Wb</span><span>Quokka</span><span>Kangaroo</span><span>KUKA</span><span>FabTools</span><span>Revit</span><span>S</span><span>H</span><span>S</span><span>E</span><span>g</span><span>F</span><span>B</span><span>U</span></div>
    <div class="ribbon" id="ribbon"></div>
    <div class="ghbar"><svg><use href="#g-open"/></svg><svg><use href="#g-save"/></svg><i class="sep"></i><span class="combo">139%<i></i></span><svg class="f"><use href="#g-fit"/></svg><i class="car"></i><svg><use href="#g-eye"/></svg><i class="car"></i><svg class="p"><use href="#g-pen"/></svg>
      <div class="r"><svg><use href="#g-cup"/></svg><svg><use href="#g-wire"/></svg><span class="picked"><svg><use href="#g-red"/></svg></span><i class="sep wide"></i><svg><use href="#g-grn"/></svg><svg><use href="#g-half"/></svg><i class="sep"></i><svg><use href="#g-blue"/></svg><i class="car"></i></div></div>
    <div class="canvas" id="canvas">
      <div class="grp"></div>
      <svg class="wires" id="wires" viewBox="966 192 948 830"></svg>
      <div class="tag">2D CNC mill settings</div>
      <div class="widgets"><svg><use href="#btn"/><use href="#g-down"/></svg><b>×</b><svg><use href="#g-scrib"/></svg><b class="ab">A/B</b><b>−</b></div>
    </div>
    <footer class="ghstatus"><span>..</span><span>0.9.0076</span><i></i></footer>
  </div>
</section>
</main>
<script src="app.js"></script>
</body>
</html>
```
FILE: styles.css
```css
*{box-sizing:border-box}
body{margin:0;overflow:hidden;font:11px "Liberation Sans",Arial,sans-serif;color:#111}
h1{margin:0;font:12px/22px "Open Sans","Noto Sans",sans-serif;white-space:nowrap;color:#000}
i,em{font-style:normal}
.paints{position:absolute;width:0;height:0}
.sprite{display:none}
.desktop{display:flex;width:1920px;height:1049px;background:#6f87a3}
.window{display:flex;flex-direction:column;border:1px solid #28323e;border-bottom:0;background:#b9cfe8}
.rhino{width:960px;background:linear-gradient(#b8cfe8 0,#b8cfe8 270px,#8ba2bc 275px,#8099b5)}
.gh{width:960px}
.titlebar{display:flex;align-items:center;height:24px;flex:none;padding-left:3px;
 background:linear-gradient(#fff5,#fff0 45%,#fff3),linear-gradient(90deg,#c4d8ef 0,#b3cdea 55%,#6fa4dc 68%,#5e9ad8 75%,#7fb4e6 100%)}
.gh .titlebar{padding-left:3px;background:linear-gradient(#fff5,#fff0 45%,#fff6),linear-gradient(90deg,#d0deed 0,#bfd6ee 25%,#77b2ee 32%,#6cabee 62%,#7ab8f4 75%,#b4e6ff 92%)}
.appicon{width:16px;height:16px;background:radial-gradient(circle at 60% 35%,#eee 0 25%,#777 30%,#111 55%);margin-right:5px}
.t-rhino{letter-spacing:-.26px}
.t-gh{letter-spacing:-.25px}
.wbtns{display:flex;margin-left:auto;align-self:flex-start;margin-right:1px;height:19px;border:1px solid #46586e;border-top:0;border-radius:0 0 5px 5px;overflow:hidden;box-shadow:0 0 0 1px #fff6}
.wbtns b{width:28px;background:linear-gradient(#dbe7f4,#b6cbe2 50%,#9cb8d6 50%,#b8d2ec);border-right:1px solid #5a6c82;display:flex;align-items:center;justify-content:center}
.wbtns .close{width:46px;border:0;color:#fff;font:bold 15px/14px "DejaVu Sans",sans-serif;padding-bottom:4px;text-shadow:0 0 2px #333,0 0 1px #333}
.wbtns .red{background:linear-gradient(#dc9a90,#cc6a5c 50%,#b0402c 50%,#c86450)}
.min::before{content:"";width:12px;height:5px;background:#fff;border:1px solid #445;border-radius:1px;margin-top:4px}
.max::before{content:"";width:12px;height:10px;border:3px solid #fff;outline:1px solid #556;background:#556}
.client{display:flex;flex-direction:column;margin:0 3px 1px;height:1022px;border:1px solid #7f8fa5;background:#e0e4ec}
.rhino .client{margin-right:2px}
/* Rhino menus */
.menu{display:grid;grid-template-columns:32px 34px 39px 45px 53px 40px 43px 71px 70px 42px 55px 51px 48px 99px 60px;height:19px;flex:none;padding-left:6px;font:12px/18px "Open Sans",sans-serif;letter-spacing:-.4px;color:#000;background:linear-gradient(#fff,#eef1f9 40%,#d8ddef 45%,#dfe4f3);border-bottom:1px solid #a9b4c6;white-space:nowrap}
.command{margin:4px 1px 0 6px;height:47px;flex:none;background:#fff;font-size:12px;display:flex;flex-direction:column}
.hist{height:28px;display:flex;border-bottom:1px solid #97a3b3;line-height:17px}
.hist span{padding-left:1px}
.prompt{flex:1;display:flex;line-height:17px;padding-left:1px}
.prompt>b{letter-spacing:-.15px}
.caret{width:1px;height:14px;margin:1px 0 0 4px;background:#000}
.sb{margin-left:auto;width:15px;display:flex;flex-direction:column;justify-content:space-around;align-items:center;background:#f3f3f3}
.tu,.td{width:0;height:0;border:3px solid transparent}
.tu{border-bottom-color:#444;border-top:0}.td{border-top-color:#444;border-bottom:0}
.blue{border:1px solid #b0b8c8}
.blue .tu{border-bottom-color:#36c}.blue .td{border-top-color:#36c}
.tooltabs{display:grid;grid-template-columns:64px 57px 62px 53px 48px 96px 55px 67px 75px 85px 71px 80px 77px 28px 16px 18px;margin:7px 0 0 3px;height:15px;flex:none;line-height:15px;white-space:nowrap;font-size:11.200px}
.tooltabs span{position:relative;z-index:0;letter-spacing:-.1px;border-top:1px solid #a3abbf;border-right:1px solid #b5bccb;border-radius:0 4px 0 0;background:#dce0ee;margin-left:9px}
.tooltabs span::before{content:"";position:absolute;z-index:-1;left:-5px;top:-1px;width:12px;height:15px;background:#dce0ee;border-left:1px solid #a3abbf;border-top:1px solid #a3abbf;transform:skewX(-32deg)}
.tooltabs .on{padding-left:3px}
.tooltabs .on,.tooltabs .on::before{background:#fff}
.tooltabs b{font:bold 14px/13px "Liberation Sans";background:#fff;text-align:center;z-index:2;border:1px solid #b5bccb}
.tooltabs svg{width:15px;height:15px;margin-left:0}
.toolbar{display:flex;height:42px;flex:none;margin-left:6px;padding-top:1px;background:linear-gradient(#fff,#e4e7ee)}
.slot{position:relative;width:28px;height:28px;display:flex;align-items:center;justify-content:center;flex:none}
.slot svg{width:23px;height:23px}
.slot svg.fly{position:absolute;right:0;bottom:1px;width:6px;height:6px}
.work{display:flex;height:828px;flex:none}
.side{width:63px;flex:none;padding:4px 7px 0 0;display:grid;grid-template-columns:28px 28px;grid-auto-rows:28px;border-top:1px solid #b0b8c8;align-content:start;margin-top:3px}
.mid{width:660px;flex:none;display:flex;flex-direction:column}
.viewport{position:relative;height:805px;background:#000;border:1px solid #8a94a4}
#scene{display:block;width:658px;height:803px}
.vlabel{position:absolute;left:0;top:0;width:87px;height:18px;background:#8ca3c0;font:12px/17px "Open Sans",sans-serif;letter-spacing:-.3px;padding-left:8px;border-radius:0 0 3px 0;color:#111}
.vlabel i{position:absolute;right:2px;top:7px;border:4px solid transparent;border-top:5px solid #000;border-bottom:0}
.vlabel::after{content:"";position:absolute;right:11px;top:1px;width:1px;height:16px;background:#000}
.vtabs{display:grid;grid-template-columns:29px 83px 46px 46px 32px;height:21px;margin:1px 0;font:12px/19px "Open Sans",sans-serif;letter-spacing:-.45px}
.vtabs span{height:20px;background:#d3d9e8;border:1px solid #b5bccb;border-top:0;clip-path:polygon(0 0,100% 0,100% 85%,96% 100%,10px 100%);padding-left:12px;margin-right:-3px}
.vtabs span:first-child{padding-left:9px;margin-right:-7px}
.vtabs .on{background:#fff;padding-left:19px;position:relative}
.vtabs .plus{background:#e0e4ec;color:#777;padding-left:14px;margin:0}
/* dock */
.dock{width:221px;flex:none;margin:3px 0 0 7px;border-top:1px solid #aab3c3;display:flex;flex-direction:column}
.ptabs{display:grid;grid-template-columns:49px 49px 50px 56px 16px;height:20px;margin-top:4px;font-size:12px;letter-spacing:-.2px;flex:none}
.ptabs span{display:flex;align-items:center;gap:3px;padding-left:4px;background:#d6dbe8;border:1px solid #a9b2c4;border-bottom-color:#98a5ba;white-space:nowrap;border-radius:3px 10px 0 0}
.ptabs .on{background:#fff;border-bottom-color:#fff}
.ptabs span svg{width:15px;height:15px;flex:none}
.cog{width:15px;height:15px;align-self:center}
.pbar{display:flex;height:22px;flex:none;background:#f5f6f8;border:1px solid #a9b2c4;border-top:0;align-items:center}
.pbar svg{width:15px;height:15px;margin:0 3px}
.layers{display:flex;height:374px;flex:none;border-left:1px solid #98a5ba;background:#fff;overflow:hidden}
.lwrap{width:203px;flex:none}
.lhead{display:grid;grid-template-columns:133px 17px 17px 17px 17px;height:23px;background:linear-gradient(#fff,#f0f1f3);border-bottom:1px solid #d5d5d5;line-height:24px;font-size:11.500px}
.lhead span{padding-left:5px}.lhead i{border-left:1px solid #e0e2e6}
.lrows{padding-top:1px}
.lrow{display:grid;grid-template-columns:134px 17px 18px 16px 17px;height:17px;line-height:17px;border-bottom:1px dotted #e4e4e4;align-items:center;font-size:11px;white-space:nowrap}
.lrow span{padding-left:21px;position:relative;letter-spacing:-.15px}
.lrow.child span{padding-left:35px}
.lrow.cur{font-weight:700;font-size:12px}
.lrow.cur span{padding-left:22px}
.lrow.marked{background:#3399ff;color:#fff;width:202px}
.lrow svg{height:14px;justify-self:center}
.lrow svg.b{width:9px}.lrow svg.l{width:13px}.lrow svg.c{width:14px}
.lrow>i{width:12px;height:12px;border:1px solid #000;justify-self:center}
.lrow.marked>i{border-color:#fff}
.lrow em{position:absolute;left:6px;top:4px;width:9px;height:9px;border:1px solid #789;border-radius:1px;font:9px/6px "Liberation Sans";text-align:center}
.vsb{flex:1;background:#f1f1f1;display:flex;flex-direction:column;align-items:center;padding:7px 0}
.vsb b{width:14px;height:269px;margin:7px 0 auto;background:linear-gradient(90deg,#f5f5f5,#d4d4d8 50%,#c2c2c8);border:1px solid #8e8f95;border-radius:2px;display:flex;align-items:center;justify-content:center}
.vsb b::before{content:"";width:7px;height:8px;background:repeating-linear-gradient(#555 0 1px,#eee 1px 3px)}
.hsb{height:17px;flex:none;display:flex;align-items:center;background:#f1f1f1;border:1px solid #98a5ba;border-top:0;padding:0 22px 0 6px}
.hsb b{margin-left:8px;width:71px;height:15px;border:1px solid #8e8f95;border-radius:2px;background:linear-gradient(#f5f5f5,#d0d0d4);text-align:center;font:8px/12px "Liberation Sans";letter-spacing:1px}
.tl,.tr{border:3px solid transparent;width:0;height:0}.tl{border-right:4px solid #333;border-left:0}.tr{border-left:4px solid #333;border-right:0;margin-left:auto}
.rcptabs{display:flex;justify-content:space-between;height:21px;flex:none;margin-top:13px;font:12px/20px "Open Sans",sans-serif;letter-spacing:-.35px;position:relative}
.rcptabs::before{content:"";position:absolute;top:-6px;left:0;right:0;height:3px;border:1px solid #b5bccb;border-width:1px 0}
.rcptabs span{width:103px;background:#f8f8f8;clip-path:polygon(0 0,84px 0,100% 100%,0 100%);display:flex;align-items:center;gap:2px;padding-left:4px;border:1px solid #98a5ba;border-bottom:0}
.rcptabs b{font:bold 8px/9px "Liberation Sans";background:#111;color:#fff;letter-spacing:-.5px;width:16px}
.rcp{background:#f0f0f0;border:1px solid #98a5ba;display:flex;flex-direction:column;height:346px}
.rcpbar{height:31px;background:linear-gradient(#fdfdfd,#f0f0f0);display:flex;align-items:center;padding:0 3px;gap:5px}
.rcpbar svg{width:22px;height:22px}
.picked{width:28px;height:28px;border:1px solid #39f;display:flex;align-items:center;justify-content:center;flex:none}
.rcpbar .end{margin-left:auto}
.rcpbody{height:311px;overflow:hidden;display:flex}
.rcpcol{width:204px;padding-left:4px;flex:none}
.rgroup{height:283px;overflow:hidden;border:1px solid #222;border-top:0;border-radius:0 0 4px 4px;background:#9a9a9a;padding:0 3px 3px;display:flex}
.rbox{flex:1;background:linear-gradient(90deg,#fff 90%,#ececf0);border:2px solid #111;border-top:0;padding:0 3px;display:flex;flex-direction:column;gap:4px;overflow:hidden}
.rs{position:relative;height:19px;flex:none;border:2px solid #000;background:#cce89a;font:bold 11px/14px "Open Sans",sans-serif;text-align:right;letter-spacing:-.25px;padding-right:1px;white-space:nowrap}
.rs:first-child{margin-top:-4px}
.rs.lft{text-align:left;padding-left:9px}
.rs b{position:absolute;top:0;bottom:0;background:#96cf2c;border:1px solid #111;border-width:0 1px;font-weight:400;font-size:11.500px;text-align:center;color:#233}
.rc{height:15px;flex:none;display:flex;gap:11px;align-items:center;font:bold 11px/14px "Open Sans",sans-serif;letter-spacing:-.2px;color:#000}
.rc i{width:15px;height:15px;border:2px solid #000;background:#fff}
.rc.on i{box-shadow:inset 0 0 0 2px #fff;background:#96cf2c}
.rnext{margin-top:4px;height:26px;border:1px solid #222;border-bottom:0;border-radius:4px 4px 0 0;background:#9c9c9c;padding:0 3px}
.rhead{height:19px;font:11.500px/17px "Open Sans",sans-serif;letter-spacing:-.3px;color:#222;display:flex;align-items:center;gap:7px}
.rhead i{width:11px;height:11px;margin-left:1px;background:#222;border:1px solid #111;position:relative}
.rhead i::after{content:"";position:absolute;left:1px;top:2px;border:3.500px solid transparent;border-top:4px solid #fff;border-bottom:0}
.rin{height:8px;background:#fff;border:1px solid #111}
.rsb{flex:1;padding:67px 0 0 2px}
.rsb b{display:flex;width:12px;height:133px;border:1px solid #111;background:linear-gradient(90deg,#fff,#ccc);align-items:center;justify-content:center;color:#888;font-size:9px}
/* osnap + status */
.osnap{display:grid;grid-template-columns:45px 48px 49px 42px 44px 37px 47px 44px 51px 47px 54px 58px 60px;margin:0 0 0 9px;height:26px;align-items:center;font-size:11.500px;white-space:nowrap;letter-spacing:-.3px}
.osnap span{display:flex;align-items:center;gap:5px}
.osnap span::before{content:"";flex:none;width:13px;height:13px;border:1px solid #8e8f8f;background:#f4f4f4;box-shadow:inset 0 0 0 1px #fff,inset 1px 1px 2px 1px #bbb;font:bold 12px/11px "DejaVu Sans",sans-serif;color:#3a56a8}
.osnap .on::before{content:"✓"}
.osnap .btn::before{border-radius:3px;width:15px;height:15px}
.status{margin:auto 0 0;display:grid;grid-template-columns:46px 73px 73px 73px 73px 143px 63px 40px 44px 45px 71px 55px 90px 39px 6px;height:20px;flex:none;border-top:1px solid #a9b4c6;font:12px/19px "Liberation Sans";white-space:nowrap}
.status span{border-right:1px solid #a9b4c6;text-align:center;letter-spacing:-.15px}
.status .on{background:#e6f4fb;font-weight:700;letter-spacing:-.5px}
.status .lay{text-align:left;display:flex;align-items:center;gap:2px;padding-left:3px}
.lay i{width:14px;height:14px;border:1px solid #111;background:#ddd}
/* Grasshopper */
.gh .client{background:#f0f0f0}
.ghmenu{display:grid;grid-template-columns:35px 37px 42px 53px 57px 60px 1fr;height:24px;flex:none;padding-left:14px;line-height:24px;font-size:11.300px;letter-spacing:-.1px;background:linear-gradient(90deg,#f0f0f0,#fdfdfd)}
.ghmenu .doc{text-align:right;padding-right:10px;letter-spacing:-.2px}
.ghtabs{display:grid;grid-template-columns:37px 38px 36px 34px 33px 34px 35px 34px 35px 34px 33px 33px 37px 53px 58px 54px 58px 44px 30px 28px 28px 28px 28px 28px 28px 28px;height:22px;flex:none;line-height:24px;font-size:11.500px;color:#777;border-bottom:1px solid #999;text-align:center}
.ghtabs .on{background:#fff;color:#111;border:1px solid #999;border-bottom:0;border-radius:6px 6px 0 0;line-height:18px;margin-bottom:-1px}
.ribbon{display:flex;gap:3px;height:88px;flex:none;padding:3px 0 0 3px;background:linear-gradient(#d8d8d8,#f0f0f0);border-right:1px solid #aaa;border-bottom:1px solid #555;border-radius:0 8px 0 0;margin-right:2px}
.rib{height:73px;border:1px solid #888;border-radius:4px;background:linear-gradient(#ddd,#eee 60%,#e4e4e4);display:flex;flex-direction:column;overflow:hidden}
.ribg{display:flex;height:59px}
.ribc{width:28px;display:flex;flex-direction:column;align-items:center;gap:4px;padding-top:3px}
.ribc svg{width:24px;height:24px}
.ribs{width:10px;display:flex;justify-content:center}
.ribs::before{content:"";width:1px;height:52px;margin-top:3px;background:#bbb}
.rib footer{height:14px;background:linear-gradient(#333,#111);color:#fff;font:11.500px/13px "Open Sans",sans-serif;letter-spacing:-.3px;padding-right:12px;display:flex;justify-content:center;position:relative}
.rib footer::after{content:"✚";position:absolute;right:1px;font:8px/13px "DejaVu Sans";color:#bbb}
.ghbar{display:flex;height:32px;flex:none;align-items:center;padding-left:4px;margin:0 2px 0 1px;background:linear-gradient(#fff,#f3f3f3)}
.ghbar svg{width:22px;height:22px;flex:none}
.ghbar svg+svg{margin-left:9px}
.ghbar .sep{width:1px;height:22px;background:#bbb;margin:0 5px 0 7px}
.combo{width:70px;height:25px;border:1px solid #c5cbd3;background:#fff;font:12px/23px "Open Sans",sans-serif;padding-left:3px;position:relative}
.combo i{position:absolute;right:4px;top:10px;border:4px solid transparent;border-top-color:#000;border-bottom:0}
.car{border:3px solid transparent;border-top-color:#000;border-bottom:0;margin:0 0 0 5px}
.ghbar .f{margin-left:5px;width:20px}
.ghbar .car+svg{margin-left:8px}
.ghbar .r{margin-left:auto;display:flex;align-items:center;padding-right:3px}
.ghbar .r svg+svg{margin:0 0 0 7px}
.ghbar .r svg+.picked{margin-left:4px}
.ghbar .r .sep{margin:0 6px 0 7px}
.ghbar .r .wide{margin:0 10px 0 8px}
.ghbar .r .sep+svg{margin-left:0}
.ghbar .r .car{margin-left:3px}
.ghbar .r .sep~svg{width:21px}
.canvas{position:relative;height:830px;flex:none;margin:0 2px 0 1px;overflow:hidden;background-color:#d4d0c8;
 background-image:linear-gradient(90deg,#bdb9b1 1px,transparent 1px),linear-gradient(#bdb9b1 1px,transparent 1px);background-size:207.700px 100%,100% 69.200px;background-position:37px 0,0 49px}
.grp{position:absolute;left:447px;top:84px;width:251px;height:694px;background:#b9a3e8;border:1px solid #9482c0}
.wires{position:absolute;left:0;top:0;width:948px;height:830px}
.tag{position:absolute;left:496px;top:52px;width:153px;height:24px;border:1px solid #333;background:linear-gradient(#fff,#e0e0e0);font:14.600px/22px "Open Sans",sans-serif;text-align:center;letter-spacing:-.05px;color:#222;white-space:nowrap}
.tag::after{content:"";position:absolute;left:71px;top:17px;width:10px;height:10px;background:#e2e2e2;border:1px solid #333;border-width:0 1px 1px 0;transform:rotate(45deg);clip-path:polygon(100% 0,100% 100%,0 100%)}
.slider{position:absolute;height:28px;display:flex;border:1px solid #222;border-radius:4px;box-shadow:0 1px 1px #0005;background:linear-gradient(#fff,#e4e4e4 30%,#c4c4c4);font:14.800px/25px "Open Sans",sans-serif;letter-spacing:-.05px;white-space:nowrap}
.slider b{font-weight:400;text-align:center;color:#1a1a1a;background:linear-gradient(#b8b6c6,#9896a8 40%,#8c8a9c);border-right:1px solid #222;border-radius:3px 0 0 3px}
.panel{position:absolute;border:1px solid #14303a;border-radius:4px;background:#78deff;overflow:hidden;box-shadow:0 1px 1px #0006}
.panel.alt{background:#7ce8ff}
.panel h2{margin:0;height:27px;border-bottom:2px solid #2d5a69;background:#5fb1ce;border-top:2px solid #9fd9ec;text-align:center;font:italic bold 18px/18px "Liberation Serif",serif;letter-spacing:.55px;color:#000;white-space:nowrap}
.panel.alt h2{background:#63b9cf}
.panel p{margin:0;height:26px;background:linear-gradient(#509ab4,#64bbd7 25%);text-align:right;padding:2px 17px 0 0;font:14px/17px "Liberation Mono",monospace;letter-spacing:-.5px;color:#2a5566}
.panel.alt p{background:linear-gradient(#55a2b8,#69c5d8 25%)}
.panel div{font:14.500px/18px "Liberation Mono",monospace;padding-left:5px;color:#2a5566;letter-spacing:.2px;display:flex;gap:9px}
.widgets{position:absolute;left:0;bottom:0;width:147px;height:28px;display:flex;align-items:center;gap:5px;padding-left:2px;border:1px solid #000;border-width:1px 1px 1px 0;background:linear-gradient(#f0f0f0,#999)}
.widgets svg{width:23px;height:23px}
.widgets b{width:18px;height:18px;margin:0 2.500px;border:1px solid #222;border-radius:3px;background:#f3f3f3;text-align:center;font:bold 15px/15px "DejaVu Sans",sans-serif}
.widgets .ab{font:9px/16px "Liberation Sans",sans-serif;letter-spacing:-.5px}
.ghstatus{flex:1;display:flex;align-items:center;padding:2px 5px 0 6px;border-top:1px solid #fff;background:linear-gradient(90deg,#f0f0f0,#fcfcfc);color:#555;font-size:11.500px}
.ghstatus span:nth-child(2){margin-left:auto;letter-spacing:-.4px}
.ghstatus i{width:10px;height:10px;margin-left:4px;background:radial-gradient(circle,#999 1px,transparent 1.300px) 0 0/4px 4px;clip-path:polygon(100% 0,100% 100%,0 100%)}
```
FILE: app.js
```js
const $ = id => document.getElementById(id);
const use = (n, c = '') => `<svg class="${c}"><use href="#${n}"/></svg>`;

/* Tool strips: a trailing * marks a button with a fly-out */
const strip = list => list.split(' ').map(n => {
  const f = n.endsWith('*');
  return `<div class="slot">${use(f ? n.slice(0, -1) : n)}${f ? use('fly', 'fly') : ''}</div>`;
}).join('');
$('toolbar').innerHTML = strip('new open save* print props cut copy paste undo* pan orbit zoom zoomwin zoomext zoomsel undoview* views* car* cplane* circdot* select* bulb* lock* layer* wheel* sph sphd* sphb* cone* gear* dims* help*');
$('side').innerHTML = strip('arrow point* poly* curve* circle* ellipse* arc* rect* hexa* fillet* srf* srfc* box* sphs* cyl* mesh* puzzle explode trim split group* ungroup cedit offset* text move* array rot boxcut* extr* grid9* align* twist* check* solids* pyr*');

/* Layers: name, bulb, lock, colour, row class */
$('layers').innerHTML = [
  ['Work layer', '', '', '#dcdcdc', 'cur'],
  ['Laser line engrave', 'sbulb', 'slock', '#666'], ['Laser engrave', 'sbulb', 'slock', '#542c2c'],
  ['Laser cut', 'sbulb', 'slock', '#f49090'], ['CNC hold down', 'sbulb', 'slock', '#ffbf00'],
  ['CNC line engrave', 'sbulb', 'slock', '#ff7fdf'], ['CNC pocket', 'sbulb', 'slock', '#f0f'],
  ['CNC cut', 'sbulb', 'slock', '#008cff', 'marked'], ['CNC 3D', 'sbulb', 'slock', '#3fbf94'],
  ['CNC tabs', 'sbulb', 'slock', '#bfbfff'], ['Robot follow curve', 'sbulb', 'slock', '#7fffbf'],
  ['SLA 3D print', 'sbulb', 'slock', '#000'], ['Laser engrave stream', 'sbulb', 'slock', '#000'],
  ['Laser cut stream', 'sbulb', 'slock', '#f00'], ['Test objects', 'sbulbOff', 'slock', '#000'],
  ['Robot tools', 'sbulbOff', 'slock', '#000', 'parent'], ['Penta marker', 'sbulbHalf', 'slock', '#000', 'child'],
  ['Machine bed outlines', 'sbulbOff', 'slockOn', '#36454f'], ['ExportLayer', 'sbulb', 'slock', '#000'],
  ['Default', 'sbulb', 'slock', '#0f0'], ['Layer 02', 'sbulb', 'slock', '#000']
].map(([n, b, l, c, k = '']) => `<div class="lrow ${k}"><span>${k === 'parent' ? '<em>−</em>' : ''}${n}</span>${k === 'cur' ? use('check', 'c') + '<s></s><s></s>' : '<s></s>' + use(b, 'b') + use(l, 'l')}<i style="background:${c}"></i></div>`).join('');

/* Remote control panel: [label, value, knob left, knob width] or [label, checked] */
$('rcp').innerHTML = '<div class="rbox">' + [
  ['Feed rate', '6', 1, 26], ['Plunge rate', '6', 1, 21], ['Milling bit diameter', '2.00', 24, 36], ['Pocket stepover', '0.80', 120, 29, 'lft'],
  ['Raster direction along Y', 0], ['Cut depth cutout', '1.2', 4, 29], ['Cut depth line engrave', '2.5', 19, 29], ['Cut depth pocket', '5.2', 31, 29],
  ['Pass depth', '0.5', 1, 29], ['Use inside cutting', 0], ['Use climb direction', 0], ['Ramp plunges', 1], ['Ramp angle', '5', 8, 26]
].map(r => r.length === 2 ? `<div class="rc ${r[1] ? 'on' : ''}"><i></i>${r[0]}</div>`
  : `<div class="rs ${r[4] || ''}">${r[0]}<b style="left:${r[2]}px;width:${r[3]}px">${r[1]}</b></div>`).join('') + '</div>';

/* Ribbon: columns of two icons, | is a separator */
$('ribbon').innerHTML = [
  ['Geometry', 'h-x,h-arrow | h-circle,h-arc h-ell,h-line h-plane,h-mesh | h-box,h-cyl h-net,h-srf', 192],
  ['Primitive', 'h-half,h-7 h-01,h-a', 61],
  ['Input', 'g-down,g-scrib | g-tog,g-knob g-45,g-list | g-pink,g-green', 137],
  ['Util', 'g-cherry,g-tree | g-ra,g-rw | g-cell,g-flask', 109]
].map(([n, cols, w]) => `<div class="rib" style="width:${w}px"><div class="ribg">` + cols.split(' ').map(c => c === '|' ? '<i class="ribs"></i>' :
  '<div class="ribc">' + c.split(',').map(s => {
    const bg = s[0] === 'h' ? 'hex' : /down|tog|45|list|tree/.test(s) ? 'btn' : '';
    return `<svg>${bg ? `<use href="#${bg}"/>` : ''}<use href="#${s}"/></svg>`;
  }).join('') + '</div>').join('') + `</div><footer>${n}</footer></div>`).join('');

/* Smooth curve through points; "/" starts a new arc after a cusp */
function spline(str, closed) {
  return str.split('/').map(part => {
    const p = part.trim().split(/\s+/).map(s => s.split(',').map(Number)), n = p.length;
    const at = i => closed ? p[(i + n) % n] : p[Math.max(0, Math.min(n - 1, i))];
    let d = `M${p[0]}`;
    for (let i = 0; i < (closed ? n : n - 1); i++) {
      const [a, b, c, e] = [at(i - 1), at(i), at(i + 1), at(i + 2)];
      d += `C${b[0] + (c[0] - a[0]) / 6} ${b[1] + (c[1] - a[1]) / 6} ${c[0] - (e[0] - b[0]) / 6} ${c[1] - (e[1] - b[1]) / 6} ${c}`;
    }
    return d;
  }).join('');
}
const crv = (pts, col, closed = true, w = 1.3) => `<path d="${spline(pts, closed)}" fill="none" stroke="${col}" stroke-width="${w}" vector-effect="non-scaling-stroke"/>`;
const ell = (cx, cy, rx, ry, col, rot = 0) => `<ellipse cx="${cx}" cy="${cy}" rx="${rx}" ry="${ry}" transform="rotate(${rot} ${cx} ${cy})" fill="none" stroke="${col}" stroke-width="1.3" vector-effect="non-scaling-stroke"/>`;
const W = '#d2d2d2', C = '#a8e8e8', B = '#0a84f0';

const tool = '768,170 760,130 770,105 810,80 860,68 920,66 980,78 1030,100 1054,130 1052,155 1035,178 1000,190 986,202 988,213 1010,212 1035,195 1060,168 1105,148 1170,142 1240,150 1300,170 1338,200 1348,230 1335,262 1300,282 1250,292 1190,296 1158,301 1147,310 1160,318 1220,308 1290,298 1360,302 1430,322 1485,358 1509,403 1500,440 1460,470 1400,484 1330,486 1260,473 1200,457 1165,453 1155,460 1180,474 1250,490 1320,503 1370,530 1402,565 1415,605 1408,645 1380,680 1335,706 1280,718 1220,721 1150,710 1080,680 1037,640 1015,605 985,583 963,580 962,600 978,625 1015,655 1038,690 1046,730 1040,770 1015,805 970,835 900,855 830,860 750,852 690,828 650,795 628,755 622,710 632,675 655,650 673,630 671,603 655,602 632,620 620,655 598,700 555,740 500,770 440,785 380,789 310,778 250,750 218,712 205,675 210,635 240,600 290,572 350,555 410,535 434,512 425,503 385,511 340,535 280,557 200,569 130,563 70,540 42,510 37,475 50,430 90,398 150,375 210,365 290,370 350,371 393,360 385,352 350,349 280,352 220,343 175,320 155,285 165,240 205,205 270,190 340,187 410,195 450,213 490,235 525,239 530,222 505,203 465,190 440,170 437,150 455,120 500,95 580,82 660,88 715,107 738,135 738,175 753,189';
const pass = crv(tool, C);
const step = 'matrix(.994 0 0 1.0107 4.6 26.3)';
$('scene').innerHTML = `
<g fill="none" stroke-width="1.4"><path d="M234 451L321 423M234 451L342 431" stroke="#3c3020"/><path d="M234 451L241 545L247 632" stroke="#35494c"/>
<path d="M225 433L234 540L238 618M321 423L326 564M342 431L345 602" stroke="#7fb0b2"/></g>
<g transform="translate(90 540) scale(.338 .33333)">
${crv('113,420 145,310 205,242 290,190 430,122 600,80 770,62 950,72 1050,90 1240,150 1350,225 1420,320 1440,410 1410,495 1330,585 1200,665 1050,722 900,755 750,765 600,757 450,722 330,680 230,625 160,550 122,480', W)}
${ell(781, 348, 217, 113, W)}
${crv('507,125 530,103 585,88 640,95 663,120 658,155 685,183 745,197 800,190 838,165 843,135 828,110 840,85 880,70 930,70 970,82 984,105 968,127 925,148 908,180 925,208 970,222 1030,222 1080,208 1105,185 1130,160 1180,150 1225,153 1260,172 1270,195 1250,215 1200,227 1130,235 1080,255 1065,280 1080,305 1120,322 1180,330 1240,322 1290,312 1340,312 1395,328 1422,360 1410,388 1370,404 1320,403 1260,390 1200,376 1140,375 1090,390 1064,422 1080,460 1130,485 1200,498 1260,510 1305,535 1320,570 1305,600 1270,618 1220,623 1170,612 1130,585 1105,548 1060,515 1010,496 960,490 910,500 875,525 864,565 880,605 920,635 944,675 935,715 895,743 840,752 780,743 735,715 723,680 740,650 765,615 770,580 755,545 720,520 670,511 610,517 560,540 528,580 515,630 490,660 440,682 390,685 340,675 308,645 305,610 330,583 370,565 430,550 480,530 515,500 526,465 505,438 460,423 400,422 340,438 285,463 240,478 195,481 150,470 127,440 135,410 165,390 220,378 290,383 360,385 420,372 465,350 479,322 460,295 415,280 350,275 290,278 250,268 234,242 245,215 285,200 335,197 385,205 420,232 470,247 530,250 580,238 608,210 600,185 575,165 530,150', B)}
${pass}<g transform="${step}">${pass}<g transform="${step}">${pass}</g></g>
${crv('698,72 640,64 560,70 500,85 460,110 436,150 440,200 470,235 505,258 532,262', C, false)}
${crv('437,165 450,190 490,215 530,232 530,252 480,228 445,200', C, false)}
</g>
<g transform="translate(225 300) scale(.33333)">
${crv('598,384 602,368 620,352 670,341 740,338 800,345 830,349/830,349 870,336 930,331 1000,335 1060,350 1093,367/1093,367 1160,366 1230,374 1290,393 1318,420 1310,434/1310,434 1370,442 1425,465 1448,495 1425,522 1370,534/1370,534 1405,552 1416,580 1395,608 1340,624 1270,624 1204,620/1204,620 1195,645 1150,667 1080,675 1000,671 930,655 871,635/871,635 810,648 730,648 650,633 595,605 577,580 580,568/580,568 520,565 460,550 425,522 425,500 445,482 487,466/487,466 450,450 442,425 460,405 510,390 560,384 598,384', W, false)}
${crv('687,380 700,368 740,363 780,368 796,385 805,400 840,411 890,411 920,400 918,388 903,375 912,362 945,356 985,358 1008,370 1003,381 980,390 973,402 990,417 1030,424 1080,418 1105,402 1130,393 1180,394 1215,405 1218,417 1195,426 1150,430 1110,436 1097,450 1115,463 1170,469 1220,465 1270,460 1320,468 1343,485 1325,498 1285,499 1230,490 1170,487 1130,494 1121,508 1145,525 1190,535 1250,540 1295,555 1300,570 1275,582 1220,580 1180,565 1150,547 1100,535 1050,535 1020,545 1020,563 1045,583 1080,597 1088,610 1070,624 1020,628 975,620 955,603 965,585 965,565 940,549 890,541 840,547 817,568 817,588 800,601 760,605 710,598 687,580 700,565 740,556 780,542 789,525 770,510 720,506 670,511 630,525 590,530 550,525 527,510 535,495 570,488 630,491 685,488 722,470 710,458 660,450 600,448 550,442 538,430 555,417 590,412 630,418 670,430 730,437 770,432 779,418 765,405 720,394', W)}
${ell(925, 476, 142, 46, W, 2)}
${crv('223,67 235,60 265,58 290,64 293,75 320,79 350,79 372,75 368,60 395,54 430,56 438,64 410,70 402,78 430,83 475,82 500,73 540,70 563,77 545,86 490,91 467,97 490,103 540,103 585,101 610,109 590,117 540,117 480,115 457,122 480,131 530,133 550,142 530,150 490,149 460,137 415,131 378,137 378,145 400,155 390,165 355,169 322,162 322,153 337,145 310,135 270,135 243,144 232,154 195,158 160,153 170,145 215,138 238,127 215,119 170,122 130,129 90,127 77,120 100,112 170,112 214,103 190,96 130,95 107,89 120,81 160,79 200,88 250,90 268,82 250,75', W)}
${ell(343, 106, 91, 20, W)}
${crv('727,140 745,136 790,138 830,149 875,147 896,140 880,131 840,126 826,118 840,111 880,110 903,118 912,128 950,134 990,132 997,126 982,115 1000,107 1040,107 1059,116 1038,128 1045,137 1090,140 1125,135 1150,127 1190,126 1212,136 1190,144 1135,148 1125,155 1150,163 1200,164 1260,161 1298,172 1275,181 1220,178 1160,178 1142,184 1160,193 1220,197 1265,205 1262,217 1220,220 1180,211 1140,199 1085,198 1073,207 1090,218 1122,231 1100,241 1050,238 1031,229 1037,215 1010,203 970,200 938,210 932,223 900,231 860,228 846,217 870,207 908,200 908,190 880,184 830,185 780,194 740,192 727,184 740,176 790,176 840,173 861,165 830,157 770,154 735,150', W)}
${ell(1003, 168, 100, 23, W, 1)}
${crv('1506,203 1470,200 1440,207 1445,215 1480,221 1506,221', W, false)}${crv('1506,247 1488,250 1483,257 1495,265 1506,267', W, false)}
</g>`;

/* Definition nodes. Label, left, divider, knob x, value, centre y, panel left, top, bottom, port y, wire ends, panel value, shade, panel title */
const nodes = [
  ['Milling bit diameter', 1074, 1223, 1260, '2.00', 327.5, 1428, 290, 365, 327.3, [321, 333, 345, 357], '2.0'],
  ['Feed rate', 1108, 1189, 1203, '6', 425.5, 1428, 386, 462, 423, [413], '6.0'],
  ['Plunge rate', 1094, 1189, 1203, '6', 524, 1428, 483, 560, 521, [511], '6.0'],
  ['Pass depth', 1085, 1176, 1189.5, '0.5', 622.5, 1427, 581, 657, 618, [602, 618, 627, 641], '0.5', 'alt'],
  ['Cut depth cutout', 1085, 1218, 1235, '1.2', 720.5, 1428, 680, 756, 716.5, [681, 718], '1.2', 'alt', 'Cut depth'],
  ['Cut depth pocket', 1085, 1219, 1262.6, '5.2', 819, 1430, 776, 857, 815, [784], '5.2', 'alt'],
  ['Cut depth line engrave', 1051, 1223, 1254.7, '2.5', 917.5, 1428, 878, 957, 917, [895], '2.5', 'alt']];
let svg = '', html = '';
for (const [t, l, dv, kx, v, sy, pl, pt, pb, py, ends, val, alt = '', title = t] of nodes) {
  html += `<div class="slider" style="left:${l - 966}px;top:${sy - 14 - 192}px;width:${1390 - l}px"><b style="width:${dv - l}px">${t}</b></div>
  <div class="panel ${alt}" style="left:${pl - 966}px;top:${pt - 192}px;width:${1651 - pl}px;height:${pb - pt}px"><h2>${title}</h2><p>{0}</p><div><span>0</span><span>${val}</span></div></div>`;
  for (const e of ends) svg += `<path d="M1655 ${py}C${e === ends[0] && ends.length < 3 ? 1760 : 1745} ${py} 1840 ${(py + e * 2) / 3} 1914 ${e}" fill="none" stroke="#000a" stroke-width="3.600"/>`;
  svg += `<path d="M1394 ${sy}C1408 ${sy} 1410 ${py} 1424 ${py}" fill="none" stroke="#444" stroke-width="3.600"/>`;
  for (const [x, y] of [[1390, sy], [pl, py], [1650, py]]) svg += `<circle cx="${x}" cy="${y}" r="5.500" fill="#fff" stroke="#000" stroke-width="2.500"/>`;
}
$('wires').innerHTML = svg;
$('canvas').insertAdjacentHTML('beforeend', html);

/* Slider rails and knobs, viewport marker and compass sit above the nodes */
let over = '';
for (const [t, l, dv, kx, v, y] of nodes) {
  const x0 = v === '6' ? kx : dv + (v === '2.5' || v === '2.00' ? 15 : 13), n = 10;
  let d = `M${x0} ${y + .5}H1376`;
  for (let i = 0; i <= n; i++) d += `M${x0 + (1376 - x0) * i / n} ${y + .5}v${i % 5 ? -4 : -8}`;
  over += `<path d="${d}" stroke="#b0b0b0" fill="none"/><rect x="${kx + 6}" y="${y - 9}" width="${v.length * 7.500 + 6}" height="18" fill="#dadada"/>`;
  over += v === '6' ? `<path d="M${kx} ${y - 4.500}l4.500 4.500-4.500 4.500-4.500-4.500z" fill="#fff" stroke="#000" stroke-width="2"/>` : `<circle cx="${kx}" cy="${y}" r="4.200" fill="#fff" stroke="#000" stroke-width="2.800"/>`;
  over += `<text x="${kx + 10}" y="${y + 4.500}" font-family="Open Sans" font-size="15" letter-spacing="-.1" fill="#111">${v}</text>`;
}
for (const n of nodes) over += `<path d="M${n[6] + 19} ${n[7] + 29}V${n[8] - 2}" stroke="#2468"/>`;
over += `<path d="M1724 606l7.500 11 7.500-11z" fill="#444"/><circle cx="1731.500" cy="594" r="15" fill="#ccc" stroke="#555" stroke-width="2.500"/>
<circle cx="1884.500" cy="993" r="21" fill="none" stroke="#111" stroke-width="3" stroke-dasharray="42 4"/><circle cx="1884.500" cy="993" r="18" fill="url(#gCompass)" stroke="#fff" stroke-width="2.500"/>
<circle cx="1884.500" cy="993" r="16.500" fill="none" stroke="#444" stroke-width="1"/><path d="M1874 963l7 8-3 3-6-2z" fill="#000"/><path d="M1880 976l5 0-4 6zM1902 985l-6 3 5 4zM1892 1011l-4-6 6 1zM1867 998l6-1-3 6z" fill="#fff"/>`;
$('canvas').insertAdjacentHTML('beforeend', `<svg class="wires" viewBox="966 192 948 830">${over}</svg>`);
```
